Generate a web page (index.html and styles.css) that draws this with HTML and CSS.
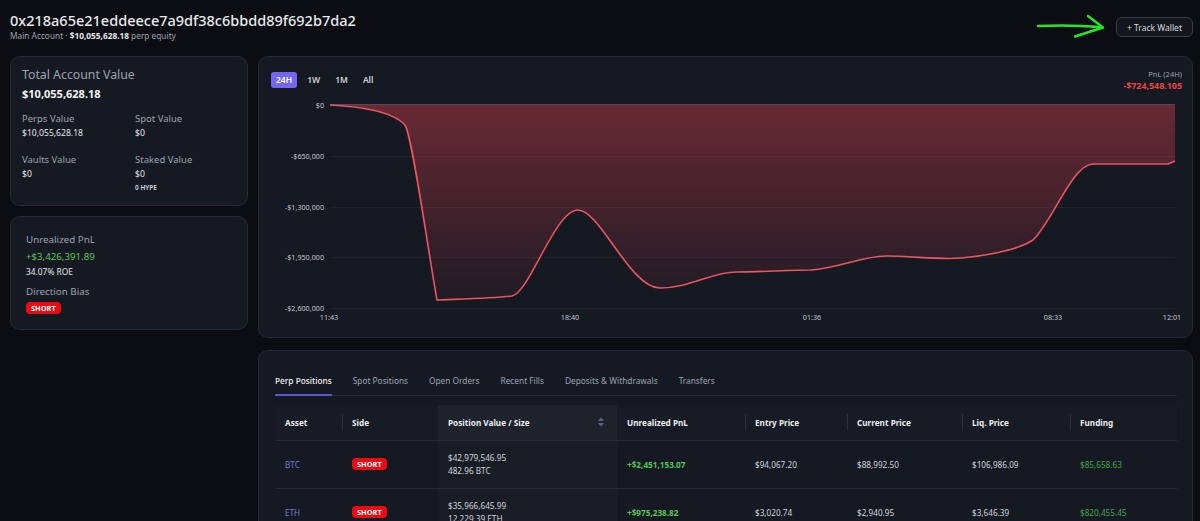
FILE: index.html
```html
<!DOCTYPE html>
<html lang="en">
<head>
<meta charset="utf-8">
<title>Wallet 0x218a65e21eddeece7a9df38c6bbdd89f692b7da2</title>
<link rel="stylesheet" href="styles.css">
</head>
<body>
<div class="page">
  <header class="header">
    <div class="head-text">
      <h1 class="title">0x218a65e21eddeece7a9df38c6bbdd89f692b7da2</h1>
      <div class="subtitle">Main Account · <b>$10,055,628.18</b> perp equity</div>
    </div>
    <svg class="arrow" width="80" height="32" viewBox="1030 10 80 32">
      <path d="M1038 26 Q1070 24.5 1100 27" fill="none" stroke="#26e626" stroke-width="2.4" stroke-linecap="round"/>
      <path d="M1088 16 L1103 27.5 L1075 36.5" fill="none" stroke="#26e626" stroke-width="2.4" stroke-linecap="round" stroke-linejoin="round"/>
    </svg>
    <button class="track-btn">+ Track Wallet</button>
  </header>

  <main class="main">
    <aside class="side">
      <section class="card acct">
        <div class="acct-label">Total Account Value</div>
        <div class="acct-value">$10,055,628.18</div>
        <div class="stat-grid">
          <div>
            <div class="stat-label">Perps Value</div>
            <div class="stat-value">$10,055,628.18</div>
          </div>
          <div>
            <div class="stat-label">Spot Value</div>
            <div class="stat-value">$0</div>
          </div>
          <div>
            <div class="stat-label">Vaults Value</div>
            <div class="stat-value">$0</div>
          </div>
          <div>
            <div class="stat-label">Staked Value</div>
            <div class="stat-value">$0</div>
            <div class="stat-sub">0 HYPE</div>
          </div>
        </div>
      </section>

      <section class="card pnl-card">
        <div class="pnl-label">Unrealized PnL</div>
        <div class="pnl-value">+$3,426,391.89</div>
        <div class="roe">34.07% ROE</div>
        <div class="pnl-label bias-label">Direction Bias</div>
        <div class="badge-row"><span class="badge">SHORT</span></div>
      </section>
    </aside>

    <div class="content">
      <section class="card chart-card">
        <div class="chart-head">
          <div class="ranges">
            <span class="range active">24H</span>
            <span class="range">1W</span>
            <span class="range">1M</span>
            <span class="range">All</span>
          </div>
          <div class="pnl-head">
            <div class="pnl-cap">PnL (24H)</div>
            <div class="pnl-amt">-$724,548.105</div>
          </div>
        </div>
        <svg class="chart" width="911" height="244" viewBox="271 93 911 244">
          <defs>
            <linearGradient id="fillg" x1="0" y1="105" x2="0" y2="300" gradientUnits="userSpaceOnUse">
              <stop offset="0" stop-color="#ef4452" stop-opacity="0.38"/>
              <stop offset="1" stop-color="#ef4452" stop-opacity="0.05"/>
            </linearGradient>
          </defs>
          <g stroke="#1f232c" stroke-width="1">
            <line x1="330" y1="156.5" x2="1175" y2="156.5"/>
            <line x1="330" y1="207.5" x2="1175" y2="207.5"/>
            <line x1="330" y1="257.5" x2="1175" y2="257.5"/>
            <line x1="330" y1="308.5" x2="1175" y2="308.5"/>
          </g>
          <path fill="url(#fillg)" d="M330,105 C370,107 395,114 405,125 C412,135 428,250 437,300 C460,299 495,298 512,296 C530,292 555,210 578,210 C600,210 630,288 660,288 C690,288 712,272 736,272 C760,272 790,270 811,270 C840,268 862,256 886,256 C912,256 940,260 961,258 C985,256 1018,250 1033,240 C1052,222 1072,166 1092,164 L1168,164 L1175,161 L1175,105 Z"/>
          <line x1="330" y1="104.5" x2="1175" y2="104.5" stroke="#4b4d56" stroke-width="1"/>
          <path fill="none" stroke="#ec5461" stroke-width="1.6" stroke-linejoin="round" d="M330,105 C370,107 395,114 405,125 C412,135 428,250 437,300 C460,299 495,298 512,296 C530,292 555,210 578,210 C600,210 630,288 660,288 C690,288 712,272 736,272 C760,272 790,270 811,270 C840,268 862,256 886,256 C912,256 940,260 961,258 C985,256 1018,250 1033,240 C1052,222 1072,166 1092,164 L1168,164 L1175,161"/>
          <g class="axis" text-anchor="end">
            <text x="324" y="108">$0</text>
            <text x="324" y="159">-$650,000</text>
            <text x="324" y="210">-$1,300,000</text>
            <text x="324" y="260">-$1,950,000</text>
            <text x="324" y="311">-$2,600,000</text>
          </g>
          <g class="axis" text-anchor="middle">
            <text x="329" y="320">11:43</text>
            <text x="570" y="320">18:40</text>
            <text x="812" y="320">01:36</text>
            <text x="1053" y="320">08:33</text>
            <text x="1172" y="320">12:01</text>
          </g>
        </svg>
      </section>

      <section class="card table-card">
        <nav class="tabs">
          <span class="tab active">Perp Positions</span>
          <span class="tab">Spot Positions</span>
          <span class="tab">Open Orders</span>
          <span class="tab">Recent Fills</span>
          <span class="tab">Deposits &amp; Withdrawals</span>
          <span class="tab">Transfers</span>
        </nav>
        <table class="positions">
          <colgroup>
            <col class="c-asset"><col class="c-side"><col class="c-pos"><col class="c-upnl">
            <col class="c-entry"><col class="c-cur"><col class="c-liq"><col class="c-fund">
          </colgroup>
          <thead>
            <tr>
              <th class="nosep">Asset</th>
              <th>Side</th>
              <th class="sorted nosep"><div class="th-sort"><span>Position Value / Size</span>
                <svg width="6" height="10" viewBox="0 0 6 10"><polygon points="0,4 3,0.5 6,4" fill="#5d6192"/><polygon points="0,6 3,9.5 6,6" fill="#5d6192"/></svg></div></th>
              <th class="nosep">Unrealized PnL</th>
              <th>Entry Price</th>
              <th>Current Price</th>
              <th>Liq. Price</th>
              <th>Funding</th>
            </tr>
          </thead>
          <tbody>
            <tr>
              <td><span class="asset">BTC</span></td>
              <td><span class="badge">SHORT</span></td>
              <td class="sorted"><div class="pos-lines">$42,979,546.95<br>482.96 BTC</div></td>
              <td class="gain">+$2,451,153.07</td>
              <td>$94,067.20</td>
              <td>$88,992.50</td>
              <td>$106,986.09</td>
              <td class="fund">$85,658.63</td>
            </tr>
            <tr>
              <td><span class="asset">ETH</span></td>
              <td><span class="badge">SHORT</span></td>
              <td class="sorted"><div class="pos-lines">$35,966,645.99<br>12,229.39 ETH</div></td>
              <td class="gain">+$975,238.82</td>
              <td>$3,020.74</td>
              <td>$2,940.95</td>
              <td>$3,646.39</td>
              <td class="fund">$820,455.45</td>
            </tr>
          </tbody>
        </table>
      </section>
    </div>
  </main>
</div>
</body>
</html>
```

FILE: styles.css
```css
* { box-sizing: border-box; margin: 0; padding: 0; }
html, body { background: #0c0d12; overflow: hidden; }
body {
  font-family: "Noto Sans", "Segoe UI", sans-serif;
  color: #e5e7eb;
  width: 1200px;
  height: 521px;
}
.page { padding: 10px 7px 0 10px; }

.header {
  position: relative;
  display: flex;
  justify-content: space-between;
  align-items: flex-start;
  height: 46px;
}
.title { font-size: 14.5px; font-weight: 500; line-height: 20px; color: #e8eaee; }
.subtitle { font-size: 8.3px; line-height: 12px; color: #9ca3af; }
.subtitle b { color: #e5e7eb; font-weight: 700; }
.arrow { position: absolute; left: 1020px; top: 0; }
.track-btn {
  margin-top: 7px;
  height: 20px;
  padding: 0 10px;
  border: 1px solid #383d48;
  border-radius: 6px;
  background: #13161d;
  color: #d6d9de;
  font-family: inherit;
  font-size: 8.5px;
  display: flex;
  align-items: center;
}

.main {
  display: grid;
  grid-template-columns: 238px 935px;
  column-gap: 10px;
  align-items: start;
}
.side { display: flex; flex-direction: column; gap: 10px; }
.content { display: flex; flex-direction: column; gap: 12px; }
.card { background: #151922; border: 1px solid #262a34; border-radius: 10px; }

.acct { height: 150px; padding: 10px 11px 0 11px; }
.acct-label { font-size: 12.3px; line-height: 16px; color: #9ca3af; }
.acct-value { font-size: 11px; font-weight: 700; line-height: 17px; margin-top: 2px; color: #f3f4f6; }
.stat-grid { display: grid; grid-template-columns: 113px 1fr; row-gap: 13px; margin-top: 10px; }
.stat-label { font-size: 9.5px; line-height: 13px; color: #9ca3af; }
.stat-value { font-size: 8.6px; line-height: 13px; margin-top: 2px; color: #e5e7eb; }
.stat-sub { font-size: 6.5px; font-weight: 600; line-height: 9px; margin-top: 2px; color: #d8dbe0; }

.pnl-card { height: 114px; padding: 16px 15px; }
.pnl-label { font-size: 9.8px; line-height: 14px; color: #9ca3af; }
.pnl-value { font-size: 9.7px; line-height: 14px; margin-top: 3px; color: #55c455; }
.roe { font-size: 8.4px; line-height: 12px; margin-top: 2px; color: #e5e7eb; }
.bias-label { margin-top: 7px; }
.badge-row { display: flex; margin-top: 3px; }
.badge {
  display: inline-block;
  background: #ea0a12;
  color: #fff;
  font-weight: 700;
  font-size: 7.4px;
  line-height: 12px;
  padding: 0 5px;
  border-radius: 4px;
}

.chart-card { height: 282px; padding: 13px 10px 0 12px; display: flex; flex-direction: column; }
.chart-head { display: flex; justify-content: space-between; height: 23px; }
.ranges { display: flex; gap: 5px; align-items: flex-start; margin-top: 2px; }
.range { font-size: 8.5px; line-height: 16px; padding: 0 5px; border-radius: 3px; color: #d1d5db; font-weight: 600; }
.range.active { background: #7466f0; color: #fff; }
.pnl-head { text-align: right; }
.pnl-cap { font-size: 7.5px; line-height: 8px; color: #9ca3af; }
.pnl-amt { font-size: 8.9px; line-height: 13px; margin-top: 1px; font-weight: 700; color: #ef4444; }
.chart { display: block; }
.axis text { font-family: "Noto Sans", sans-serif; font-size: 7.2px; fill: #c3c7cf; }

.table-card { height: 200px; padding: 12px 15px 0 16px; }
.tabs { display: flex; gap: 21px; border-bottom: 1px solid #242934; }
.tab { font-size: 8.3px; line-height: 12px; padding: 12px 0 8px; color: #9ca3af; }
.tab.active { color: #f3f4f6; font-weight: 500; padding-bottom: 7px; border-bottom: 2px solid #5b56cf; margin-bottom: -1px; }

.positions { width: 902px; border-collapse: collapse; table-layout: fixed; margin-top: 9px; }
.c-asset { width: 67px; }
.c-side { width: 96px; }
.c-pos { width: 179px; }
.c-upnl { width: 128px; }
.c-entry { width: 102px; }
.c-cur { width: 115px; }
.c-liq { width: 108px; }
.c-fund { width: 107px; }
.positions th {
  height: 35px;
  padding: 0 10px;
  text-align: left;
  font-size: 8.2px;
  font-weight: 700;
  color: #eceef2;
  background-color: #171b24;
  background-image: linear-gradient(#2b303b, #2b303b);
  background-size: 1px 17px;
  background-position: left center;
  background-repeat: no-repeat;
  border-bottom: 1px solid #252a35;
}
.positions th.nosep { background-image: none; }
.positions th.sorted { background-color: #1e222b; }
.th-sort { display: flex; justify-content: space-between; align-items: center; padding-right: 3px; }
.th-sort svg { display: block; }
.positions td {
  height: 48px;
  padding: 0 10px;
  font-size: 8.2px;
  color: #d1d5db;
  border-bottom: 1px solid #252a35;
}
.positions td.sorted { background: #181c25; }
.asset { color: #7275d6; }
.pos-lines { line-height: 13.5px; }
.positions td.gain { color: #55c455; font-weight: 700; }
.positions td.fund { color: #40a84a; }
```
